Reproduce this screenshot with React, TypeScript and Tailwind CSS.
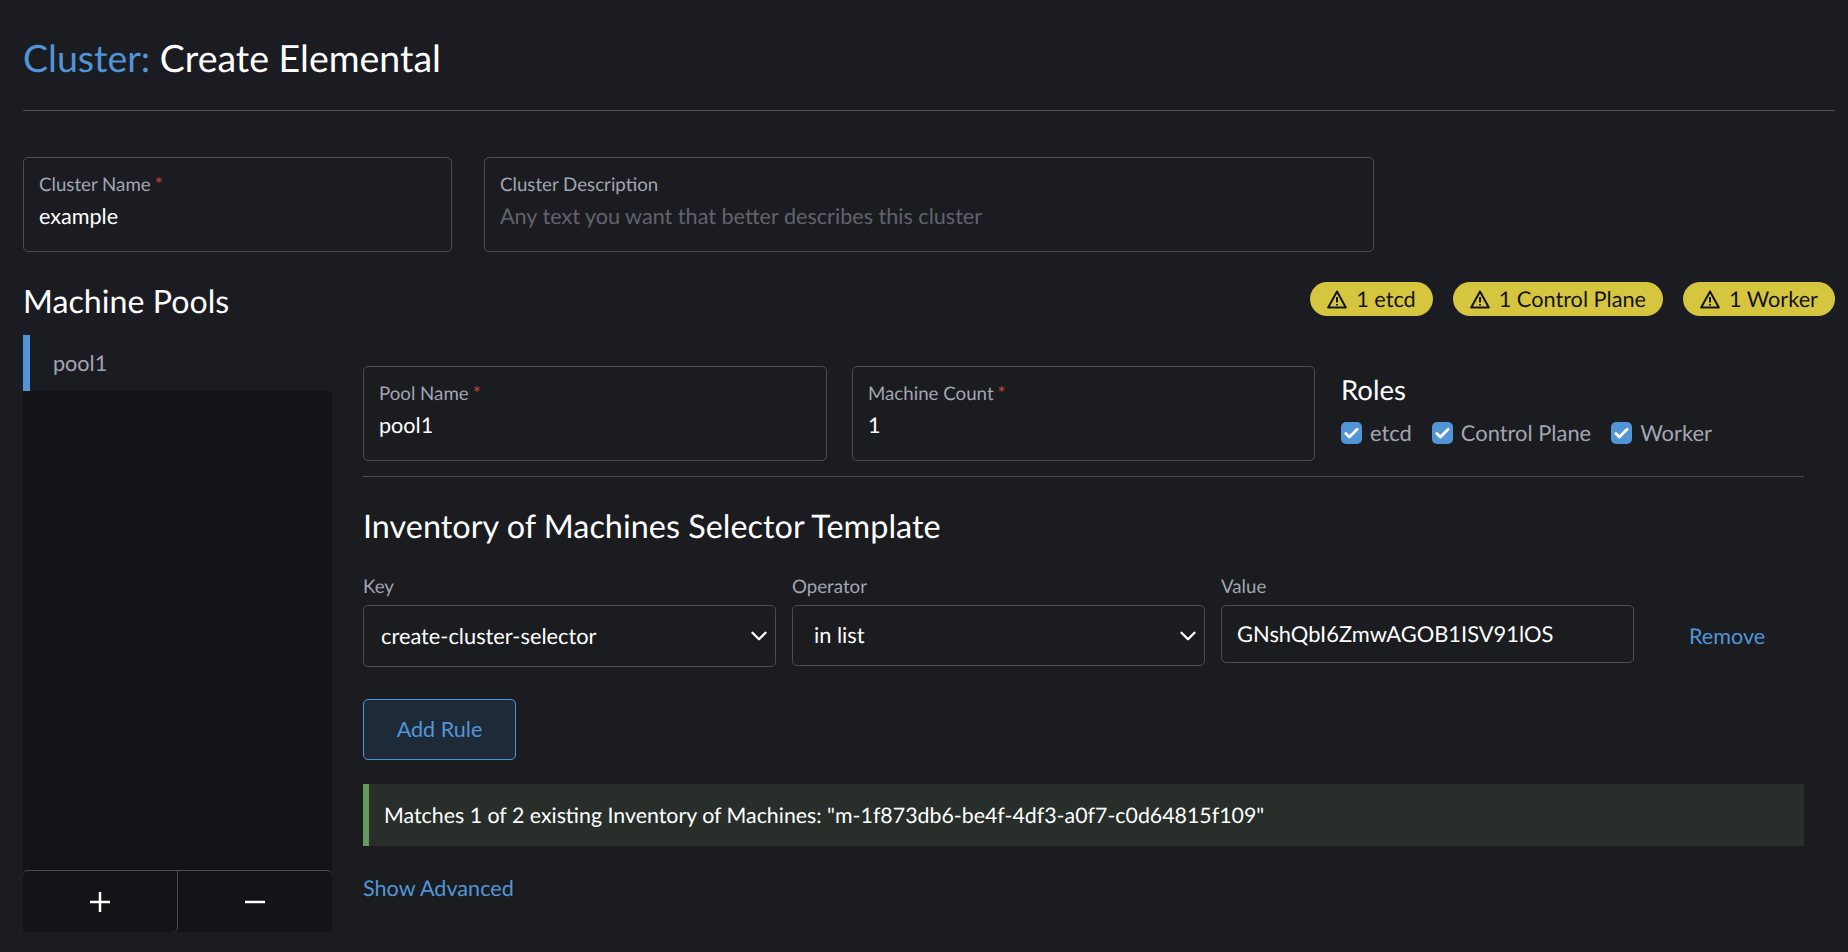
import { Check, ChevronDown } from 'lucide-react';

interface FieldProps {
  label: string;
  value?: string;
  placeholder?: string;
  required?: boolean;
  className: string;
}

function Field({ label, value, placeholder, required, className }: FieldProps) {
  return (
    <div className={`rounded-[5px] border border-[#4b4c53] pl-[15px] pt-[14px] ${className}`}>
      <div className="text-[18.7px] leading-[24px] text-[#a3a5b1]">
        {label}
        {required && <span className="ml-[4px] text-[#c9413f]">*</span>}
      </div>
      <div className={`mt-[5px] text-[21.6px] leading-[30px] ${value ? 'text-white' : 'text-[#62636b]'}`}>
        {value ?? placeholder}
      </div>
    </div>
  );
}

function Badge({ label }: { label: string }) {
  return (
    <div className="flex h-[34px] items-center gap-[9px] rounded-full bg-[#d6c63f] px-[17px] text-[21.7px] text-[#141419]">
      <svg width="20" height="19" viewBox="0 0 20 19" fill="none" stroke="currentColor" strokeWidth="2" strokeLinejoin="round">
        <path d="M10 1.5 1.2 17.5h17.6z" />
        <path d="M10 7v5.5M10 14v1.6" />
      </svg>
      <span>{label}</span>
    </div>
  );
}

function Role({ label }: { label: string }) {
  return (
    <div className="flex items-center gap-[8px]">
      <span className="flex h-[22px] w-[21px] items-center justify-center rounded-[5px] bg-[#5295d6] text-white">
        <Check size={17} strokeWidth={4} />
      </span>
      <span className="text-[21.9px] leading-[26px] text-[#a3a5b1]">{label}</span>
    </div>
  );
}

function SelectBox({ label, value, className, boxClass }: { label: string; value: string; className: string; boxClass: string }) {
  return (
    <div className={className}>
      <div className="h-[43px] pt-[12px] text-[18.7px] leading-[24px] text-[#a3a5b1]">{label}</div>
      <div className={`flex items-center justify-between rounded-[5px] border border-[#4b4c53] pr-[3px] text-[21.8px] text-white ${boxClass}`}>
        <span>{value}</span>
        <ChevronDown size={26} strokeWidth={2.2} />
      </div>
    </div>
  );
}

export default function App() {
  return (
    <div
      className="h-[952px] overflow-hidden bg-[#1b1c21] pl-[23px] pr-[13px] [text-rendering:geometricPrecision]"
      style={{ fontFamily: 'Lato, "Noto Sans", sans-serif' }}
    >
      {/* Header */}
      <header className="h-[111px] border-b border-[#4b4c53] pt-[33px]">
        <h1 className="text-[37.5px] leading-[50px] text-white">
          <span className="text-[#5295d6]">Cluster:</span> Create Elemental
        </h1>
      </header>

      {/* Name and description */}
      <div className="mt-[46px] flex gap-[32px]">
        <Field label="Cluster Name" value="example" required className="h-[95px] w-[429px]" />
        <Field
          label="Cluster Description"
          placeholder="Any text you want that better describes this cluster"
          className="h-[95px] w-[890px]"
        />
      </div>

      {/* Machine pools heading */}
      <div className="flex h-[83px] items-start justify-between">
        <h2 className="pt-[28px] text-[32.2px] leading-[42px] text-white">Machine Pools</h2>
        <div className="mt-[30px] flex gap-[20px]">
          <Badge label="1 etcd" />
          <Badge label="1 Control Plane" />
          <Badge label="1 Worker" />
        </div>
      </div>

      <div className="flex h-[597px] bg-[#1a1c20]">
        {/* Pool list */}
        <aside className="flex w-[309px] shrink-0 flex-col bg-[#141418]">
          <div className="h-[56px] border-l-[7px] border-[#5295d6] bg-[#1b1c21] pl-[23px] pt-[14px] text-[21.6px] leading-[28px] text-[#a3a5b1]">
            pool1
          </div>
          <div className="flex-1" />
          <div className="flex h-[62px] rounded-t-[5px] border-t border-[#4b4c53] text-white">
            <button className="flex w-[155px] items-center justify-center rounded-br-[5px] border-r border-[#4b4c53]">
              <svg width="20" height="20" viewBox="0 0 20 20" stroke="currentColor" strokeWidth="2.5">
                <path d="M10 0v20M0 10h20" />
              </svg>
            </button>
            <button className="flex flex-1 items-center justify-center">
              <svg width="20" height="20" viewBox="0 0 20 20" stroke="currentColor" strokeWidth="2.5">
                <path d="M0 10h20" />
              </svg>
            </button>
          </div>
        </aside>

        {/* Pool editor */}
        <main className="min-w-0 flex-1 px-[31px] pt-[31px]">
          <div className="flex h-[111px] gap-[25px] border-b border-[#4b4c53]">
            <Field label="Pool Name" value="pool1" required className="h-[95px] w-[464px]" />
            <Field label="Machine Count" value="1" required className="h-[95px] w-[463px]" />
            <div className="ml-[1px]">
              <div className="pt-[7px] text-[27.5px] leading-[34px] text-white">Roles</div>
              <div className="mt-[13px] flex gap-[20px]">
                <Role label="etcd" />
                <Role label="Control Plane" />
                <Role label="Worker" />
              </div>
            </div>
          </div>

          <h3 className="pt-[29px] text-[32.4px] leading-[40px] text-white">Inventory of Machines Selector Template</h3>

          <div className="mt-[15px] flex items-start gap-[16px]">
            <SelectBox label="Key" value="create-cluster-selector" className="w-[413px] shrink-0 pt-[1px]" boxClass="h-[62px] pl-[17px]" />
            <SelectBox label="Operator" value="in list" className="w-[413px] shrink-0 pt-[1px]" boxClass="h-[61px] pl-[21px]" />
            <div className="w-[413px] shrink-0 pt-[1px]">
              <div className="h-[43px] pt-[12px] text-[18.7px] leading-[24px] text-[#a3a5b1]">Value</div>
              <div className="flex h-[58px] items-center rounded-[5px] border border-[#4b4c53] pl-[15px] text-[21.9px] text-white">
                GNshQbI6ZmwAGOB1ISV91lOS
              </div>
            </div>
            <a className="ml-[39px] pt-[60px] text-[21.6px] leading-[30px] text-[#5295d6]">Remove</a>
          </div>

          <button className="mt-[32px] block h-[61px] w-[153px] rounded-[5px] border border-[#5295d6] bg-[#1f2a38] text-[21.6px] text-[#5295d6]">
            Add Rule
          </button>

          <div className="mt-[24px] flex h-[62px] items-center border-l-[6px] border-[#659a5c] bg-[#282f2b] pl-[15px] text-[21.35px] text-white">
            Matches 1 of 2 existing Inventory of Machines: "m-1f873db6-be4f-4df3-a0f7-c0d64815f109"
          </div>

          <a className="mt-[27px] block text-[21.6px] leading-[30px] text-[#5295d6]">Show Advanced</a>
        </main>
      </div>
    </div>
  );
}
